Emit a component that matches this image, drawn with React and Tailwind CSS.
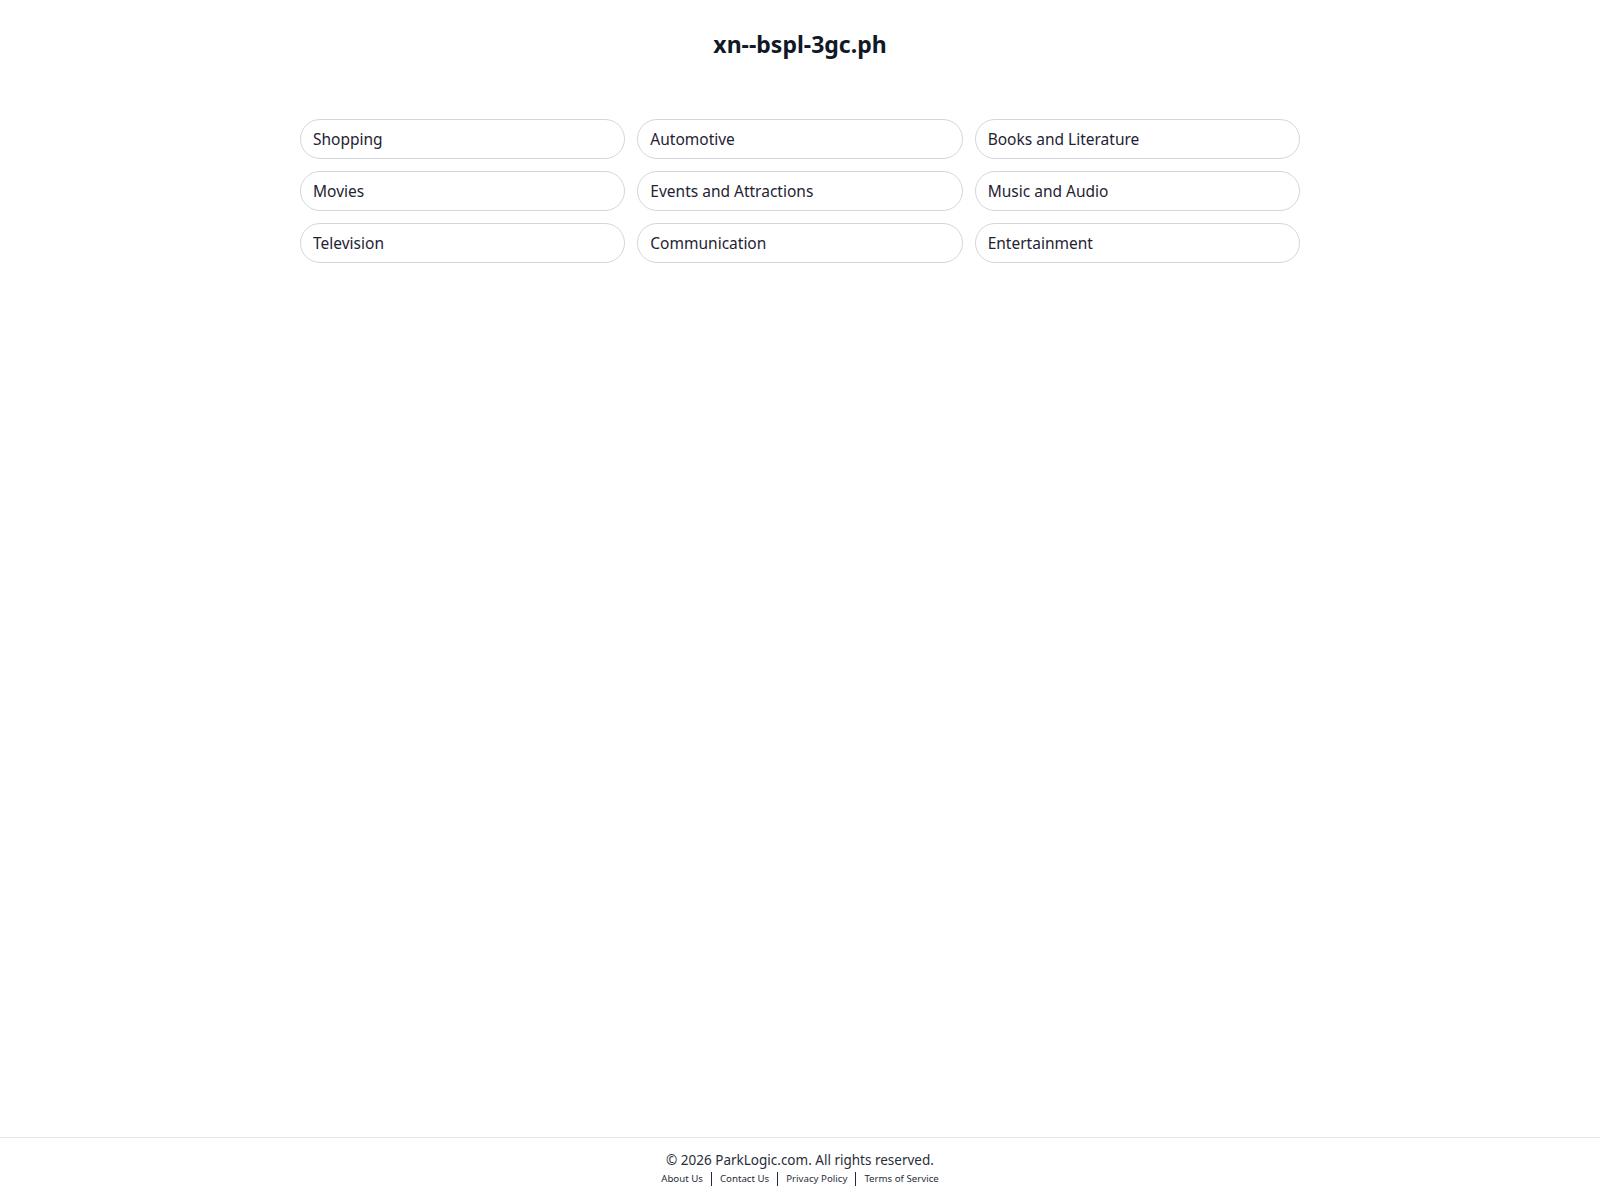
const categories = [
  'Shopping', 'Automotive', 'Books and Literature',
  'Movies', 'Events and Attractions', 'Music and Audio',
  'Television', 'Communication', 'Entertainment',
];

const links = ['About Us', 'Contact Us', 'Privacy Policy', 'Terms of Service'];

export default function App() {
  return (
    <div className="min-h-screen flex flex-col bg-white text-[#1f2333]" style={{ fontFamily: '"Noto Sans", "Open Sans", sans-serif' }}>
      <main className="flex-1">
        <h1 className="pt-[28px] text-center text-[23px] font-bold leading-[32px] text-[#111827]">xn--bspl-3gc.ph</h1>
        <div className="mx-auto mt-[59px] grid w-[1000px] grid-cols-3 gap-[12px]">
          {categories.map(c => (
            <a key={c} href="#" className="flex h-[40px] items-center rounded-full border border-[#d4d6de] px-[12px] pt-[2px] text-[15.5px] text-[#1f2333]">
              {c}
            </a>
          ))}
        </div>
      </main>
      <footer className="h-[63px] border-t border-[#e5e7eb] pt-[12px] text-center">
        <p className="text-[13.5px] leading-[20px] text-[#2a2d3a]">© 2026 ParkLogic.com. All rights reserved.</p>
        <div className="mt-[2px] flex items-center justify-center text-[9.7px] leading-[14px] text-[#2a2d3a]">
          {links.map((l, i) => (
            <span key={l} className="flex items-center">
              {i > 0 && <span className="mx-[8px] h-[14px] w-px bg-[#1f2a44]" />}
              <a href="#">{l}</a>
            </span>
          ))}
        </div>
      </footer>
    </div>
  );
}
